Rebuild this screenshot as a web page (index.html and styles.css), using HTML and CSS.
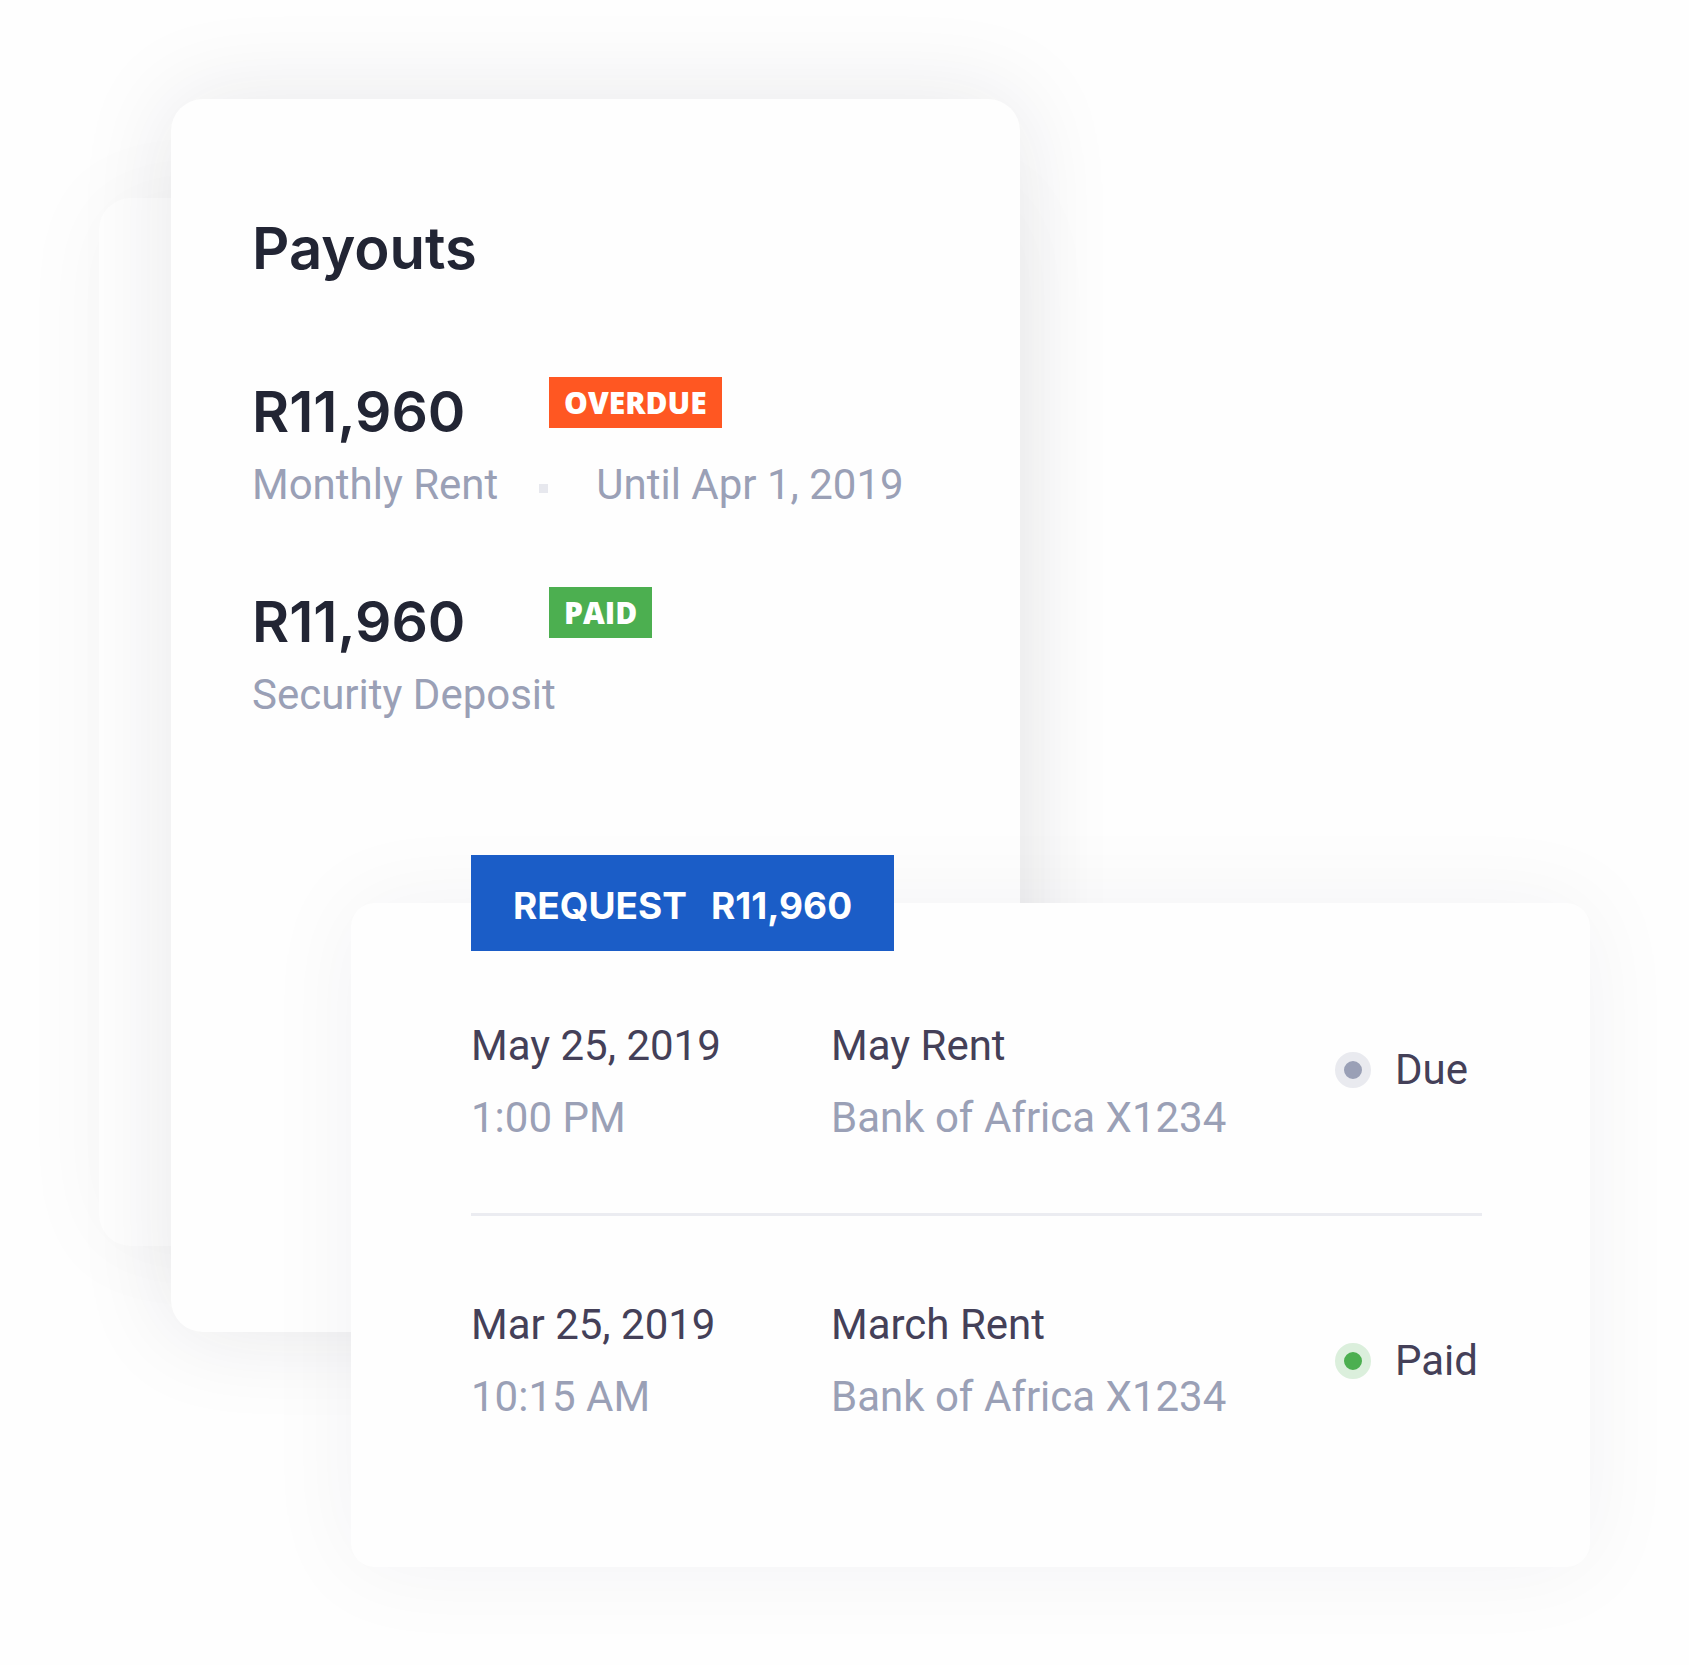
FILE: index.html
```html
<!DOCTYPE html>
<html lang="en">
<head>
<meta charset="utf-8">
<meta name="viewport" content="width=device-width, initial-scale=1">
<title>Payouts</title>
<link rel="stylesheet" href="styles.css">
</head>
<body>
<main class="stage">
  <div class="backdrop"></div>
  <section class="payouts">
    <h1 class="title">Payouts</h1>
    <ul class="payout-list">
      <li>
        <div class="payout-head">
          <span class="amount">R11,960</span>
          <span class="badge badge-overdue">OVERDUE</span>
        </div>
        <div class="payout-note">
          <span>Monthly Rent</span><span class="separator"></span><span>Until Apr 1, 2019</span>
        </div>
      </li>
      <li>
        <div class="payout-head">
          <span class="amount">R11,960</span>
          <span class="badge badge-paid">PAID</span>
        </div>
        <div class="payout-note"><span>Security Deposit</span></div>
      </li>
    </ul>
  </section>
  <section class="history">
    <button class="request" type="button"><span>REQUEST</span><span>R11,960</span></button>
    <table class="transactions">
      <tbody>
        <tr>
          <td class="when">May 25, 2019<span class="sub">1:00 PM</span></td>
          <td>May Rent<span class="sub">Bank of Africa X1234</span></td>
          <td class="state"><span class="status status-due">Due</span></td>
        </tr>
        <tr>
          <td class="when">Mar 25, 2019<span class="sub">10:15 AM</span></td>
          <td>March Rent<span class="sub">Bank of Africa X1234</span></td>
          <td class="state"><span class="status status-paid">Paid</span></td>
        </tr>
      </tbody>
    </table>
  </section>
</main>
</body>
</html>
```
FILE: styles.css
```css
*,
*::before {
  box-sizing: border-box;
}

body {
  margin: 0;
  background: #fefefe;
  color: #444058;
  font-family: Roboto, "Liberation Sans", sans-serif;
  font-size: 42px;
  line-height: 72px;
}

/* Three overlapping cards share one grid */
.stage {
  display: grid;
  grid-template-columns: 99fr 72fr 180fr 669fr 570fr 99fr;
  grid-template-rows: 99px 99px 705px 343px 86px auto;
  padding-bottom: 98px;
}

.backdrop {
  grid-area: 3 / 2 / 5 / 5;
  border-radius: 32px;
  background: #fefefe;
  box-shadow: 0 0 96px rgba(30, 30, 50, 0.04);
}

.payouts {
  grid-area: 2 / 3 / 6 / 5;
  padding: 113px 81px;
  border-radius: 32px;
  background: #fefefe;
  box-shadow: 0 0 96px rgba(30, 30, 50, 0.1);
}

.title,
.amount {
  margin: 0;
  color: #222534;
  font: 600 57px/72px Inter, "Liberation Sans", sans-serif;
}

.title {
  font-size: 58px;
}

.payout-list {
  display: grid;
  gap: 65px;
  margin: 92px 0 0;
  padding: 0;
  list-style: none;
}

.payout-head {
  display: grid;
  grid-template-columns: 297px auto;
  justify-content: start;
  align-items: start;
}

.badge {
  margin-top: 1px;
  padding: 0 15px;
  color: #fff;
  font: 800 30px/51px "Open Sans", "Noto Sans", sans-serif;
}

.badge-overdue {
  background: #ff5722;
}

.badge-paid {
  background: #4caf50;
}

.payout-note {
  display: flex;
  align-items: center;
  padding-top: 1px;
  color: #9aa0b6;
  white-space: nowrap;
}

.separator {
  width: 9px;
  height: 9px;
  margin: 6px 48px 0 41px;
  background: #e7e8ee;
}

.history {
  grid-area: 4 / 4 / 7 / 6;
  padding: 0 108px 134px 120px;
  border-radius: 24px;
  background: #fefefe;
  box-shadow: 0 0 96px rgba(30, 30, 50, 0.05);
}

.request {
  display: flex;
  gap: 24px;
  margin: -48px 0 59px;
  padding: 6px 42px 0;
  border: 0;
  background: #1b5dc7;
  color: #fff;
  font: 700 37px/90px Inter, "Liberation Sans", sans-serif;
  cursor: pointer;
}

.transactions {
  width: 100%;
  border-spacing: 0;
}

.transactions td {
  padding: 0;
  white-space: nowrap;
}

.transactions tr:first-child td {
  padding-bottom: 59px;
  border-bottom: 3px solid #ebecf1;
}

.transactions tr:last-child td {
  padding-top: 73px;
}

.transactions .when {
  width: 360px;
}

.transactions .state {
  width: 147px;
}

.transactions tr:first-child .state {
  padding-bottom: 83px;
}

.sub {
  display: block;
  color: #9aa0b6;
}

.status {
  display: flex;
  align-items: center;
  gap: 24px;
}

.status::before {
  content: "";
  width: 36px;
  height: 36px;
  border: 9px solid #e9eaef;
  border-radius: 50%;
  background: #9aa0b6;
}

.status-paid::before {
  border-color: #dbefdc;
  background: #4caf50;
}
```
